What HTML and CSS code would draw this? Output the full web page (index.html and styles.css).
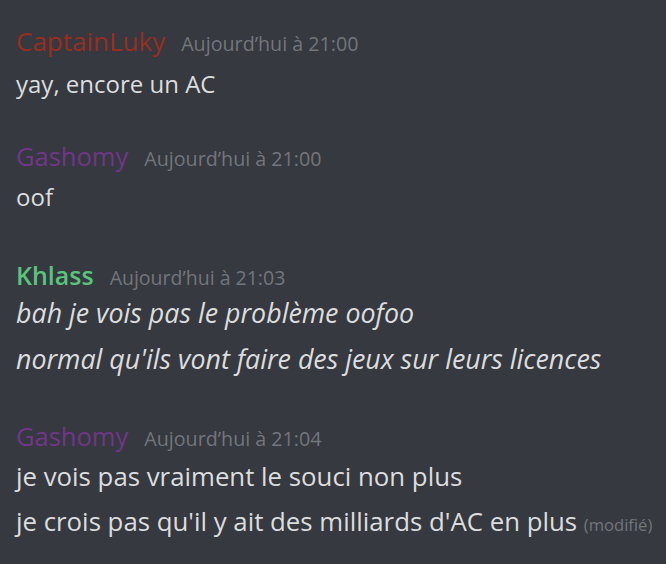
FILE: index.html
```html
<!DOCTYPE html>
<html lang="fr">
<head>
<meta charset="utf-8">
<link rel="stylesheet" href="styles.css">
</head>
<body>
<div class="chat">
  <div class="group group-first">
    <div class="header"><span class="name red">CaptainLuky</span><span class="time">Aujourd’hui à 21:00</span></div>
    <div class="line">yay, encore un AC</div>
  </div>
  <div class="group group-second">
    <div class="header"><span class="name purple">Gashomy</span><span class="time">Aujourd’hui à 21:00</span></div>
    <div class="line">oof</div>
  </div>
  <div class="group group-italic">
    <div class="header"><span class="name green">Khlass</span><span class="time">Aujourd’hui à 21:03</span></div>
    <div class="line">bah je vois pas le problème oofoo</div>
    <div class="line">normal qu'ils vont faire des jeux sur leurs licences</div>
  </div>
  <div class="group group-large">
    <div class="header"><span class="name purple">Gashomy</span><span class="time">Aujourd’hui à 21:04</span></div>
    <div class="line">je vois pas vraiment le souci non plus</div>
    <div class="line">je crois pas qu'il y ait des milliards d'AC en plus <span class="edited">(modifié)</span></div>
  </div>
</div>
</body>
</html>
```

FILE: styles.css
```css
html, body {
  margin: 0;
  padding: 0;
  background: #36393f;
}
body {
  width: 666px;
  height: 564px;
  overflow: hidden;
  font-family: "Open Sans", "Noto Sans", sans-serif;
}
.chat {
  display: flex;
  flex-direction: column;
  padding: 21px 0 0 16px;
}
.header {
  display: flex;
  align-items: baseline;
  gap: 16px;
  height: 40px;
  line-height: 40px;
  white-space: nowrap;
}
.name {
  font-size: 25.5px;
  font-weight: 500;
}
.red { color: #992d22; font-size: 26px; }
.purple { color: #71368a; }
.green { color: #5bc47c; font-weight: 600; font-size: 25px; }
.time {
  font-size: 19.7px;
  color: #72767d;
}
.line {
  font-size: 24px;
  line-height: 44px;
  color: #dcddde;
  white-space: nowrap;
}
.group-first .header {
  height: 41px;
}
.group.group-second {
  margin-top: 30px;
}
.group-second .header {
  height: 39px;
}
.group.group-italic {
  margin-top: 36px;
}
.group-italic .header {
  height: 35px;
}
.group-italic .time {
  font-size: 19.5px;
}
.group-italic .line {
  font-style: italic;
  font-size: 26.8px;
  line-height: 46px;
}
.group.group-large {
  margin-top: 34px;
}
.group-large .header {
  height: 38px;
}
.group-large .line {
  font-size: 25.8px;
}
.group-large .line + .line {
  line-height: 46px;
}
.edited {
  font-size: 16.6px;
  color: #72767d;
}
```
